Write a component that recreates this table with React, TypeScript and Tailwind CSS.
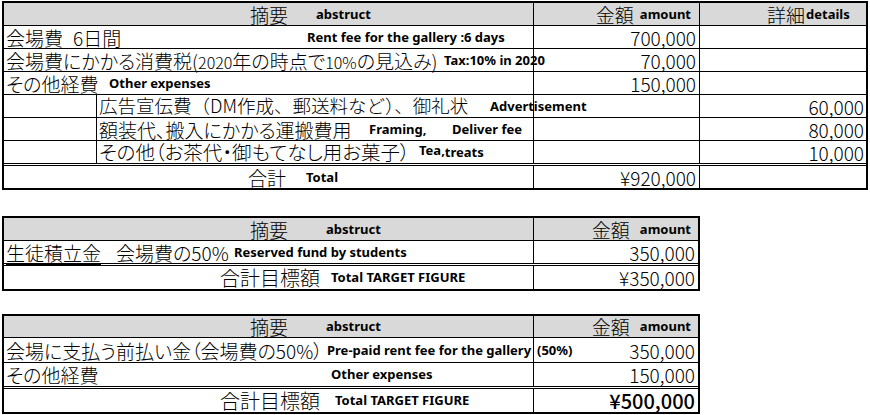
import React from "react";
import clsx from "clsx";
import { twMerge } from "tailwind-merge";

const jp =
  "font-['Noto_Sans_CJK_JP',sans-serif] text-[19px] font-light leading-none [font-feature-settings:'palt'] shrink-0";
const en = "font-['Noto_Sans',sans-serif] text-[13px] font-bold leading-none shrink-0";

const cx = (...a: Parameters<typeof clsx>) => twMerge(clsx(...a));

const Row: React.FC<{ className?: string; children?: React.ReactNode }> = ({ className, children }) => (
  <div className={cx("flex h-[23px] border-b border-black", className)}>{children}</div>
);

// text cell of the 摘要 column
const Main: React.FC<{ className?: string; children?: React.ReactNode }> = ({ className, children }) => (
  <div className={cx("flex w-[529px] shrink-0 items-center whitespace-nowrap", className)}>{children}</div>
);

// amount cell, positioned so its left rule paints over overflowing text
const Amount: React.FC<{ className?: string; children?: React.ReactNode }> = ({ className, children }) => (
  <div
    className={cx(
      "relative flex items-center justify-end border-l border-black pr-[3px] whitespace-nowrap",
      className
    )}
  >
    {children}
  </div>
);

const Num: React.FC<{ children: React.ReactNode; className?: string }> = ({ children, className }) => (
  <span className={cx(jp, className)}>{children}</span>
);

const Detail: React.FC<{ children?: React.ReactNode }> = ({ children }) => (
  <div className="flex flex-1 items-center justify-end border-l border-black pr-[2px]">
    {children && <Num>{children}</Num>}
  </div>
);

const IndentRow: React.FC<{ children: React.ReactNode; value: string; className?: string }> = ({
  children,
  value,
  className,
}) => (
  <Row className={className}>
    <div className="w-[93px] shrink-0 border-r border-black" />
    <div className="flex w-[436px] shrink-0 items-center whitespace-nowrap pl-[2px]">{children}</div>
    <Amount className="w-[166px] shrink-0" />
    <Detail>{value}</Detail>
  </Row>
);

export default function App() {
  return (
    <div className="h-[415px] w-[870px] bg-white pl-[2px] pt-[1px] text-black">
      {/* 収支表 */}
      <div className="w-[866px] border-2 border-black">
        <Row className="bg-[#d9d9d9]">
          <Main className="pl-[246px]">
            <span className={cx(jp, "w-[66px]")}>摘要</span>
            <span className={en}>abstruct</span>
          </Main>
          <Amount className="w-[166px] shrink-0 pr-[8px]">
            <span className={jp}>金額</span>
            <span className={cx(en, "ml-[6px]")}>amount</span>
          </Amount>
          <div className="flex flex-1 items-center border-l border-black pl-[67px]">
            <span className={jp}>詳細</span>
            <span className={cx(en, "ml-[1px]")}>details</span>
          </div>
        </Row>
        <Row>
          <Main className="pl-[2px]">
            <span className={cx(jp, "w-[301px]")}>
              会場費<span className="ml-[10px]">6日間</span>
            </span>
            <span className={en}>Rent fee for the gallery :6 days</span>
          </Main>
          <Amount className="w-[166px] shrink-0">
            <Num>700,000</Num>
          </Amount>
          <Detail />
        </Row>
        <Row>
          <Main className="pl-[2px]">
            <span className={cx(jp, "w-[438px]")}>
              会場費にかかる消費税(<span className="text-[16px]">2020</span>年の時点で
              <span className="text-[16px]">10%</span>の見込み)
            </span>
            <span className={en}>Tax:10% in 2020</span>
          </Main>
          <Amount className="w-[166px] shrink-0">
            <Num>70,000</Num>
          </Amount>
          <Detail />
        </Row>
        <Row>
          <Main className="pl-[2px]">
            <span className={cx(jp, "w-[103px]")}>その他経費</span>
            <span className={en}>Other expenses</span>
          </Main>
          <Amount className="w-[166px] shrink-0">
            <Num>150,000</Num>
          </Amount>
          <Detail />
        </Row>
        <IndentRow value="60,000">
          <span className={cx(jp, "w-[391px] [font-feature-settings:normal] text-[18.5px]")}>
            広告宣伝費（DM作成、郵送料など）、御礼状
          </span>
          <span className={en}>Advertisement</span>
        </IndentRow>
        <IndentRow value="80,000">
          <span className={cx(jp, "w-[270px]")}>額装代、搬入にかかる運搬費用</span>
          <span className={cx(en, "w-[83px]")}>Framing,</span>
          <span className={en}>Deliver fee</span>
        </IndentRow>
        <IndentRow value="10,000" className="h-[25px] border-b-[3px] border-double">
          <span className={cx(jp, "w-[320px] text-[19.5px]")}>その他（お茶代・御もてなし用お菓子）</span>
          <span className={cx(en, "-translate-y-[2px]")}>Tea,</span>
          <span className={en}>treats</span>
        </IndentRow>
        <div className="flex h-[22px]">
          <Main className="pl-[244px]">
            <span className={cx(jp, "w-[58px]")}>合計</span>
            <span className={en}>Total</span>
          </Main>
          <Amount className="w-[166px] shrink-0">
            <Num>¥920,000</Num>
          </Amount>
          <Detail />
        </div>
      </div>

      {/* 生徒積立金 */}
      <div className="mt-[26px] w-[698px] border-2 border-black">
        <Row className="bg-[#d9d9d9]">
          <Main className="pl-[246px]">
            <span className={cx(jp, "w-[76px]")}>摘要</span>
            <span className={en}>abstruct</span>
          </Main>
          <Amount className="flex-1 pr-[7px]">
            <span className={jp}>金額</span>
            <span className={cx(en, "ml-[10px]")}>amount</span>
          </Amount>
        </Row>
        <Row className="h-[25px] border-b-[3px] border-double">
          <Main className="pl-[2px]">
            <span className={cx(jp, "w-[228px]")}>
              <span className="underline decoration-1 underline-offset-[3px]">生徒積立金</span>
              <span className="ml-[15px]">会場費の50%</span>
            </span>
            <span className={en}>Reserved fund by students</span>
          </Main>
          <Amount className="flex-1">
            <Num>350,000</Num>
          </Amount>
        </Row>
        <div className="flex h-[23px]">
          <Main className="pl-[216px]">
            <span className={cx(jp, "w-[111px] text-[20px] [font-feature-settings:normal]")}>合計目標額</span>
            <span className={en}>Total TARGET FIGURE</span>
          </Main>
          <Amount className="flex-1">
            <Num>¥350,000</Num>
          </Amount>
        </div>
      </div>

      {/* 前払い */}
      <div className="mt-[23px] w-[698px] border-2 border-black">
        <Row className="h-[22px] bg-[#d9d9d9]">
          <Main className="pl-[246px]">
            <span className={cx(jp, "w-[76px]")}>摘要</span>
            <span className={en}>abstruct</span>
          </Main>
          <Amount className="flex-1 pr-[7px]">
            <span className={jp}>金額</span>
            <span className={cx(en, "ml-[10px]")}>amount</span>
          </Amount>
        </Row>
        <Row className="h-[25px]">
          <Main className="pl-[2px]">
            <span className={cx(jp, "w-[321px]")}>会場に支払う前払い金（会場費の50%）</span>
            <span className={en}>Pre-paid rent fee for the gallery</span>
          </Main>
          <Amount className="flex-1 justify-between pl-[3px]">
            <span className={en}>(50%)</span>
            <Num>350,000</Num>
          </Amount>
        </Row>
        <Row className="h-[26px] border-b-[3px] border-double">
          <Main className="pl-[2px]">
            <span className={cx(jp, "w-[325px]")}>その他経費</span>
            <span className={en}>Other expenses</span>
          </Main>
          <Amount className="flex-1">
            <Num>150,000</Num>
          </Amount>
        </Row>
        <div className="flex h-[23px]">
          <Main className="pl-[216px]">
            <span className={cx(jp, "w-[115px] text-[20px] [font-feature-settings:normal]")}>合計目標額</span>
            <span className={en}>Total TARGET FIGURE</span>
          </Main>
          <Amount className="flex-1">
            <Num className="text-[20px] font-medium">¥500,000</Num>
          </Amount>
        </div>
      </div>
    </div>
  );
}
